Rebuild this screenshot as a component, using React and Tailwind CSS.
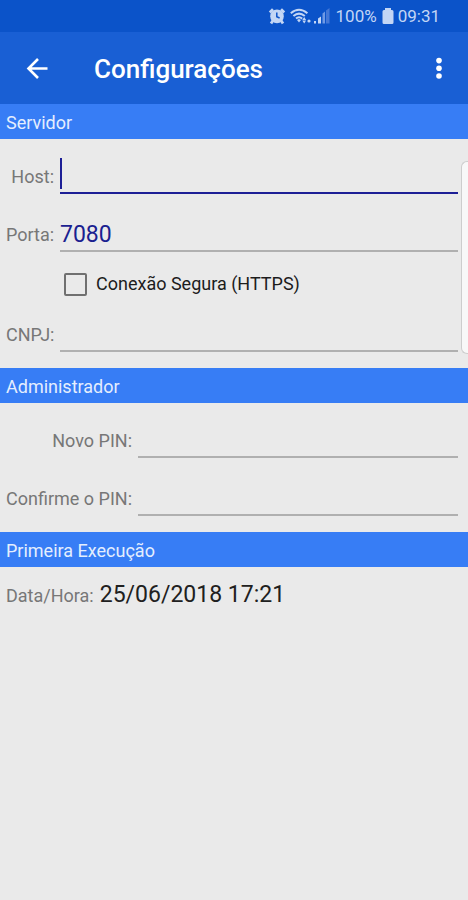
function StatusBar() {
  return (
    <div className="flex h-8 items-center justify-end bg-[#0b53c9] pr-7 text-[#c3d6f5]">
      <svg viewBox="0 0 18 18" className="mr-1 h-[18px] w-[18px]" aria-hidden="true">
        <circle cx="9" cy="9.400" r="6.8" fill="currentColor" />
        <path d="M1.800 5.4 5 2.2M16.200 5.4 13 2.2M5 13.500 3 16.500M13 13.500 15 16.500" stroke="currentColor" strokeWidth="2.800" />
        <path d="M8.800 5.4V9.8L11.600 11" fill="none" stroke="#0b53c9" strokeWidth="1.500" />
      </svg>
      <svg viewBox="0 0 21 18" className="mr-[3px] h-[18px] w-[21px]" aria-hidden="true">
        <g fill="none" stroke="currentColor" strokeWidth="2">
          <path d="M.8 6.2Q9 -.8 17.4 6.2" />
          <path d="M3.4 9Q9 4.2 14.8 9" />
          <path d="M6 11.6Q9 9 12.2 11.6" />
        </g>
        <path d="M7 13 9 12 11 13 9 15.5Z" fill="currentColor" />
        <path d="M12.3 13 14.2 10 16.1 13ZM12.3 13.4H16.1L14.2 16.4Z" fill="currentColor" />
        <circle cx="19" cy="14" r="1.600" fill="currentColor" />
      </svg>
      <svg viewBox="0 0 16 18" className="mr-[6px] h-[18px] w-4" aria-hidden="true">
        <path d="M0 14H2V16.500H0ZM4 11.500 7 9.500V16.500H4Z" fill="currentColor" />
        <path d="M8.500 6.500 11 4.500V16.500H8.500Z" fill="#6f99e4" />
        <path d="M12 3.500 15.500 1V16.500H12Z" fill="#4578d6" />
      </svg>
      <span className="mr-[5px] text-[17px] leading-6">100%</span>
      <svg viewBox="0 0 12 18" className="mr-1 h-[18px] w-3" aria-hidden="true">
        <path d="M3 1H9V3H10Q11.500 3 11.500 4.500V15.500Q11.500 17 10 17H2Q.5 17 .5 15.500V4.500Q.5 3 2 3H3Z" fill="currentColor" />
      </svg>
      <span className="text-[17px] leading-6">09:31</span>
    </div>
  );
}

function AppBar() {
  return (
    <header className="flex h-[72px] items-center bg-[#195fd4] pt-[2px] pr-[18px] pl-6 text-white">
      <button type="button" aria-label="Voltar" className="mr-[44px] flex h-[26px] w-[26px] items-center justify-center">
        <svg viewBox="0 0 26 26" className="h-[26px] w-[26px]" fill="none" stroke="currentColor" strokeWidth="2.6">
          <path d="M23.500 12.500H4.500M14 3 4.500 12.500 14 22" />
        </svg>
      </button>
      <h1 className="flex-1 text-[26px] leading-8 font-medium">Configurações</h1>
      <button type="button" aria-label="Mais opções" className="flex h-8 w-[22px] items-center justify-center">
        <svg viewBox="0 0 8 24" className="h-6 w-2" fill="currentColor">
          <circle cx="4" cy="3.600" r="2.800" />
          <circle cx="4" cy="11.300" r="2.800" />
          <circle cx="4" cy="19" r="2.800" />
        </svg>
      </button>
    </header>
  );
}

function SectionTitle({ children }) {
  return (
    <h2 className="flex h-[35px] items-center bg-[#377df5] px-[6px] pt-[2px] text-[18px] leading-6 text-[#e4eefe]">
      {children}
    </h2>
  );
}

function Field({ id, label, labelWidth, focused, ...input }) {
  return (
    <div className="flex h-9 items-center gap-[6px]">
      <label htmlFor={id} className={`${labelWidth} shrink-0 pt-[2px] text-right text-[18px] leading-6 whitespace-nowrap text-[#777777]`}>
        {label}
      </label>
      <div className="relative min-w-0 flex-1">
        <input
          id={id}
          className={`block h-9 w-full bg-transparent pt-[2px] text-[23px] leading-8 text-[#1a2190] outline-none ${
            focused ? "border-b-2 border-[#1d1f96] caret-transparent" : "border-b-2 border-[#b0b0b0]"
          }`}
          {...input}
        />
        {focused && <span className="absolute top-0 left-0 h-[31px] w-[2px] bg-[#1d1f96]" />}
      </div>
    </div>
  );
}

export default function App() {
  return (
    <div className="relative min-h-screen bg-[#eaeaea] font-[Roboto,sans-serif]">
      <StatusBar />
      <AppBar />
      <main>
        <SectionTitle>Servidor</SectionTitle>
        <div className="flex flex-col gap-[22px] pt-[19px] pr-[10px] pb-4 pl-[6px]">
          <Field id="host" label="Host:" labelWidth="w-12" focused type="text" />
          <Field id="porta" label="Porta:" labelWidth="w-12" type="text" inputMode="numeric" defaultValue="7080" />
          <label className="ml-[58px] flex h-5 items-center gap-[9px] text-[18px] leading-6 text-[#1c1c1c]">
            <input type="checkbox" className="h-[23px] w-[23px] shrink-0 appearance-none rounded-[2px] border-2 border-[#707070] checked:bg-[#1d1f96]" />
            Conexão Segura (HTTPS)
          </label>
          <Field id="cnpj" label="CNPJ:" labelWidth="w-12" type="text" />
        </div>
        <SectionTitle>Administrador</SectionTitle>
        <div className="flex flex-col gap-[22px] pt-[19px] pr-[10px] pb-4 pl-[6px]">
          <Field id="pin" label="Novo PIN:" labelWidth="w-[126px]" type="password" />
          <Field id="pin2" label="Confirme o PIN:" labelWidth="w-[126px]" type="password" />
        </div>
        <SectionTitle>Primeira Execução</SectionTitle>
        <p className="flex items-baseline gap-[6px] px-[6px] pt-3 text-[23px] leading-8 text-[#202020]">
          <span className="text-[18px] text-[#777777]">Data/Hora:</span>
          25/06/2018 17:21
        </p>
      </main>
      <div className="absolute top-[161px] right-0 h-[193px] w-[7px] rounded-l-md border border-r-0 border-[#cdcdcd] bg-[#f8f8f8]" />
    </div>
  );
}
